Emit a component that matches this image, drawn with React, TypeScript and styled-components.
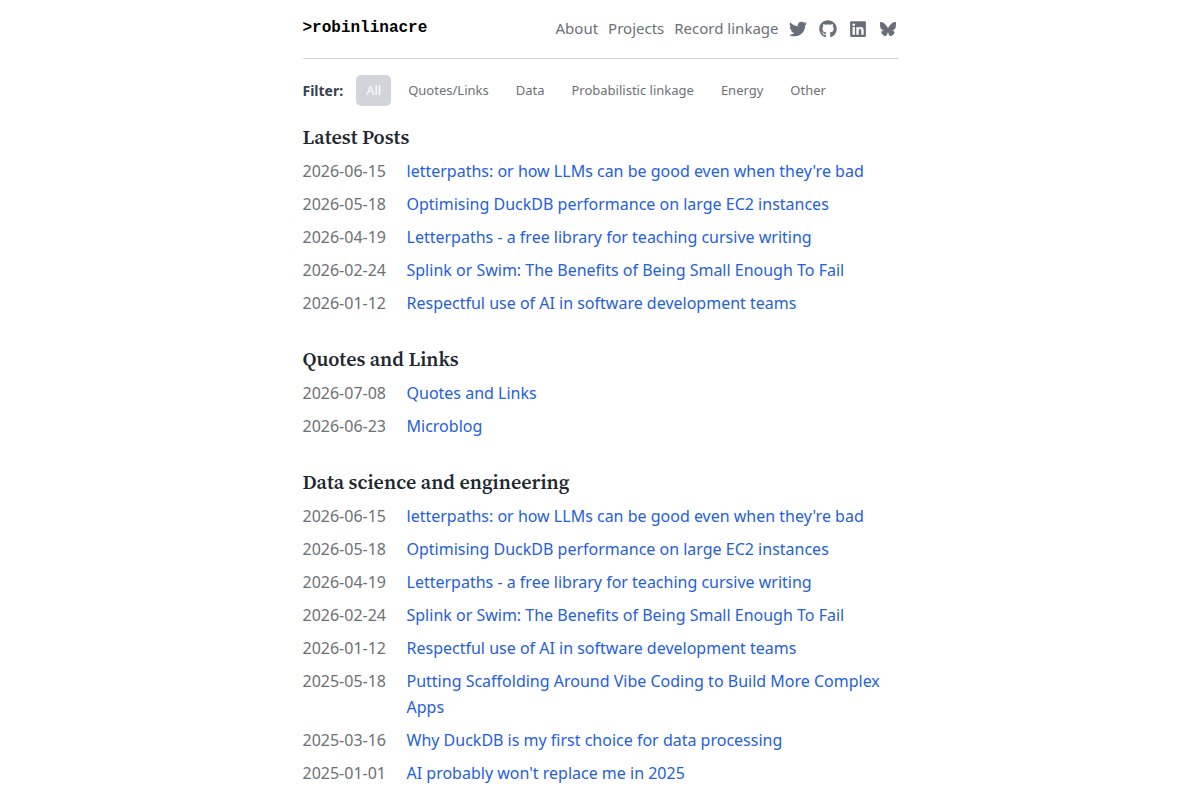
import React from "react";
import styled, { createGlobalStyle } from "styled-components";
import { FaTwitter, FaGithub, FaLinkedin } from "react-icons/fa";
import { FaBluesky } from "react-icons/fa6";

const GlobalStyle = createGlobalStyle`
  * { box-sizing: border-box; }
  body {
    margin: 0;
    background: #fff;
    color: #212529;
    font-family: "Noto Sans", sans-serif;
    font-size: 16px;
    line-height: 26px;
  }
`;

const Page = styled.div`
  max-width: 595px;
  margin: 0 auto;
`;

const Header = styled.header`
  display: flex;
  justify-content: space-between;
  align-items: flex-start;
  padding: 15px 0 16px;
  border-bottom: 1px solid #d1d5db;
`;

const Brand = styled.a`
  color: #000;
  font: bold 16px/26px "Liberation Mono", monospace;
  text-decoration: none;
`;

const Nav = styled.nav`
  display: flex;
  align-items: center;
  gap: 10px;
  padding-right: 1px;
`;

const NavLink = styled.a`
  color: #6c7077;
  font-size: 15px;
  line-height: 27px;
  text-decoration: none;
`;

const SocialLinks = styled.div`
  display: flex;
  gap: 12px;
`;

const SocialLink = styled.a`
  display: flex;
  align-items: center;
  justify-content: center;
  width: 18px;
  height: 27px;
  color: #686d78;
`;

const Filters = styled.div`
  display: flex;
  align-items: center;
  padding: 16px 0 15px;
`;

const FilterLabel = styled.span`
  margin-right: 13px;
  color: #374151;
  font-size: 14px;
  font-weight: 700;
`;

const FilterButton = styled.button<{ $active?: boolean }>`
  margin-right: 7px;
  padding: 5px 10px;
  border: 0;
  border-radius: 5px;
  background: ${(p) => (p.$active ? "#d1d5db" : "transparent")};
  color: ${(p) => (p.$active ? "#fff" : "#6c7077")};
  font: 13px/21px "Noto Sans", sans-serif;
  cursor: pointer;
`;

const Section = styled.section`
  margin-bottom: 27px;
`;

const Heading = styled.h2`
  margin: 0 0 5px;
  color: #20272f;
  font: 600 20px/32px "Source Serif 4", "Source Serif Pro", "Noto Serif", "Liberation Serif", serif;
`;

const PostList = styled.ul`
  margin: 0;
  padding: 0;
  list-style: none;
`;

const PostRow = styled.li`
  display: grid;
  grid-template-columns: 84px 1fr;
  column-gap: 20px;
  margin-bottom: 7px;
`;

const PostDate = styled.time`
  color: #6c7075;
`;

const PostLink = styled.a`
  color: #2560db;
  text-decoration: none;
`;

const filters = ["All", "Quotes/Links", "Data", "Probabilistic linkage", "Energy", "Other"];

const socials = [
  { name: "Twitter", Icon: FaTwitter, size: 18 },
  { name: "GitHub", Icon: FaGithub, size: 18 },
  { name: "LinkedIn", Icon: FaLinkedin, size: 18 },
  { name: "Bluesky", Icon: FaBluesky, size: 16 },
];

const latest = [
  ["2026-06-15", "letterpaths: or how LLMs can be good even when they're bad"],
  ["2026-05-18", "Optimising DuckDB performance on large EC2 instances"],
  ["2026-04-19", "Letterpaths - a free library for teaching cursive writing"],
  ["2026-02-24", "Splink or Swim: The Benefits of Being Small Enough To Fail"],
  ["2026-01-12", "Respectful use of AI in software development teams"],
];

const sections = [
  { title: "Latest Posts", posts: latest },
  {
    title: "Quotes and Links",
    posts: [
      ["2026-07-08", "Quotes and Links"],
      ["2026-06-23", "Microblog"],
    ],
  },
  {
    title: "Data science and engineering",
    posts: [
      ...latest,
      ["2025-05-18", "Putting Scaffolding Around Vibe Coding to Build More Complex Apps"],
      ["2025-03-16", "Why DuckDB is my first choice for data processing"],
      ["2025-01-01", "AI probably won't replace me in 2025"],
      ["2024-12-08", "The emerging impact of LLMs on my productivity"],
    ],
  },
];

export default function App() {
  return (
    <>
      <GlobalStyle />
      <Page>
        <Header>
          <Brand href="#">&gt;robinlinacre</Brand>
          <Nav>
            <NavLink href="#">About</NavLink>
            <NavLink href="#">Projects</NavLink>
            <NavLink href="#">Record linkage</NavLink>
            <SocialLinks>
              {socials.map(({ name, Icon, size }) => (
                <SocialLink key={name} href="#" aria-label={name}>
                  <Icon size={size} />
                </SocialLink>
              ))}
            </SocialLinks>
          </Nav>
        </Header>
        <Filters>
          <FilterLabel>Filter:</FilterLabel>
          {filters.map((f, i) => (
            <FilterButton key={f} type="button" $active={i === 0}>{f}</FilterButton>
          ))}
        </Filters>
        <main>
          {sections.map((s) => (
            <Section key={s.title}>
              <Heading>{s.title}</Heading>
              <PostList>
                {s.posts.map(([date, title]) => (
                  <PostRow key={title}>
                    <PostDate dateTime={date}>{date}</PostDate>
                    <PostLink href="#">{title}</PostLink>
                  </PostRow>
                ))}
              </PostList>
            </Section>
          ))}
        </main>
      </Page>
    </>
  );
}
